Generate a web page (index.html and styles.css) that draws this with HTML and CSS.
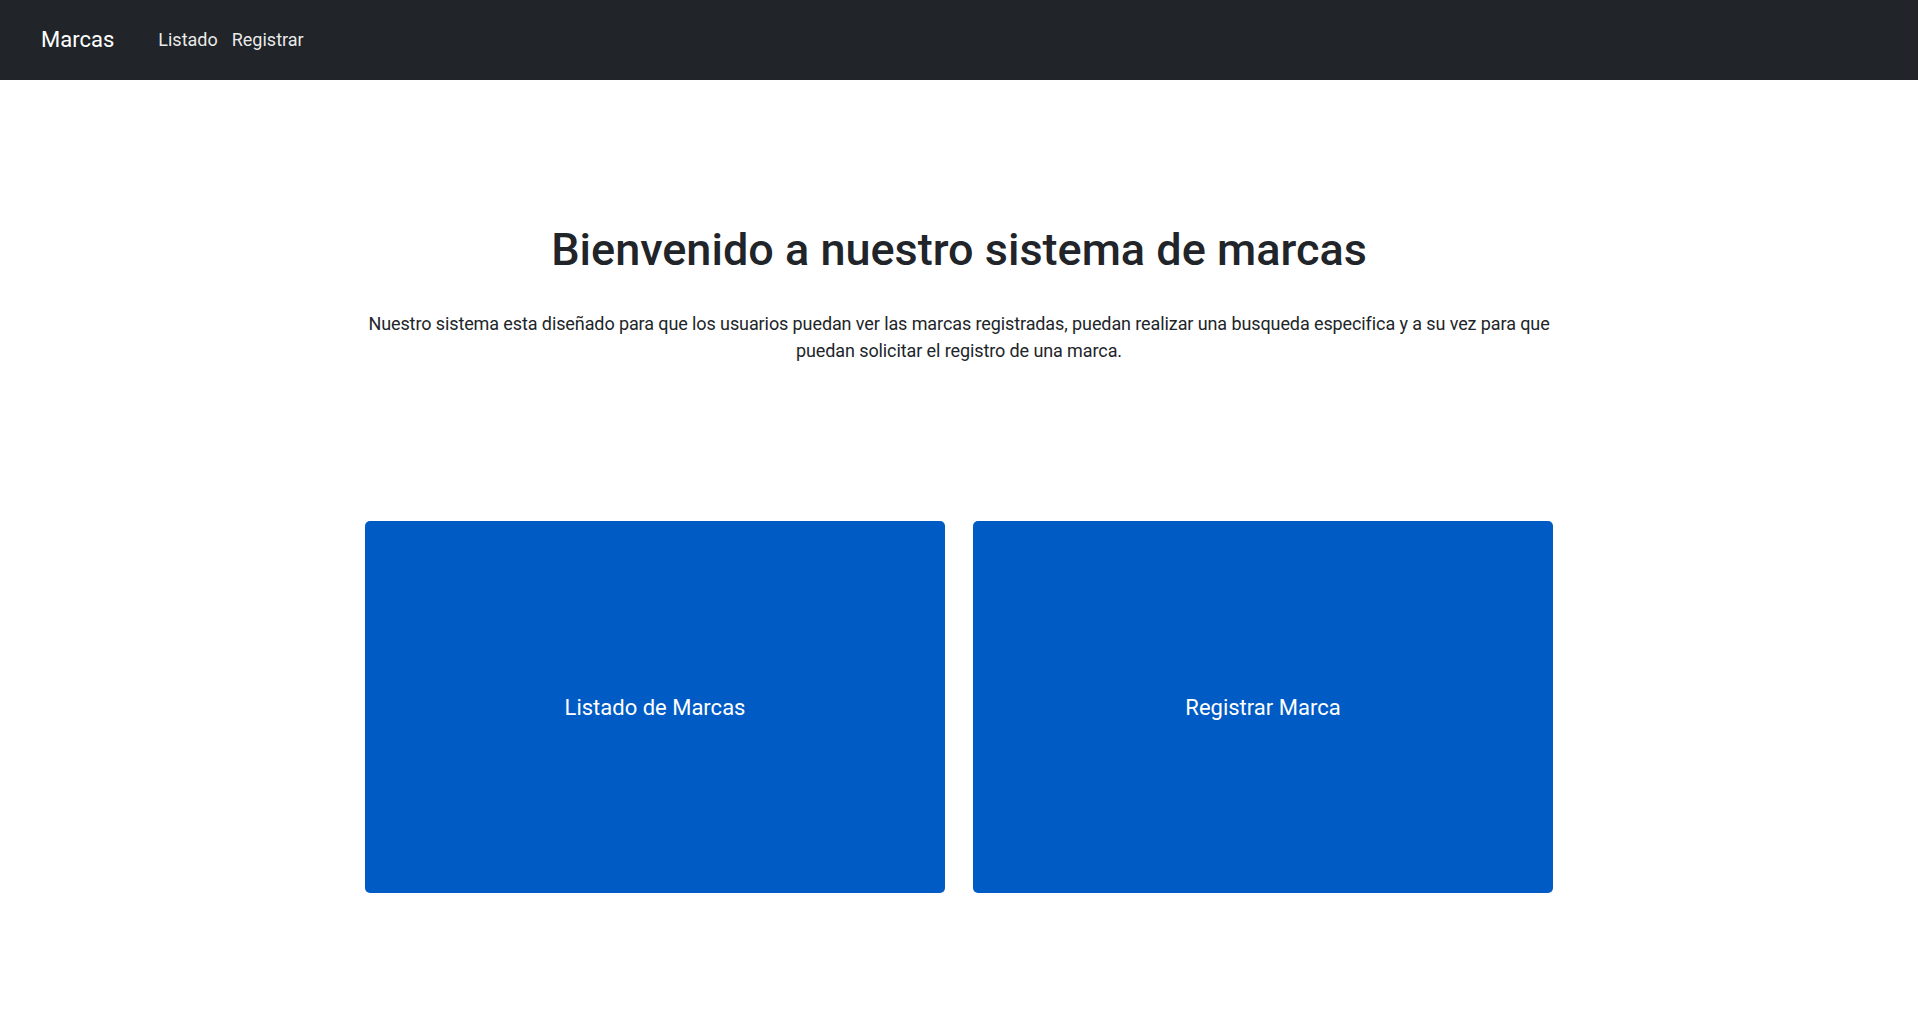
FILE: index.html
```html
<!DOCTYPE html>
<html lang="es">
<head>
<meta charset="utf-8">
<title>Marcas</title>
<link rel="stylesheet" href="styles.css">
</head>
<body>
<nav class="navbar">
  <a class="brand" href="#">Marcas</a>
  <ul class="nav">
    <li><a class="nav-link" href="#">Listado</a></li>
    <li><a class="nav-link" href="#">Registrar</a></li>
  </ul>
</nav>
<main class="container">
  <section class="intro">
    <h1 class="title">Bienvenido a nuestro sistema de marcas</h1>
    <p class="lead">Nuestro sistema esta diseñado para que los usuarios puedan ver las marcas registradas, puedan realizar una busqueda especifica y a su vez para que puedan solicitar el registro de una marca.</p>
  </section>
  <section class="cards">
    <a class="card" href="#">Listado de Marcas</a>
    <a class="card" href="#">Registrar Marca</a>
  </section>
</main>
</body>
</html>
```
FILE: styles.css
```css
* { box-sizing: border-box; }
html, body { margin: 0; padding: 0; }
body {
  font-family: Roboto, "Noto Sans", sans-serif;
  color: #212529;
  background: #fff;
}
a { text-decoration: none; }
.navbar {
  height: 80px;
  background: #212529;
  display: flex;
  align-items: center;
  padding: 0 0 2px 41px;
}
.brand {
  color: #fff;
  font-size: 22px;
  margin-right: 44px;
}
.nav {
  list-style: none;
  margin: 0;
  padding: 0;
  display: flex;
  gap: 14px;
}
.nav-link {
  color: rgba(255,255,255,0.92);
  font-size: 18px;
}
.container {
  width: 1188px;
  margin: 0 auto;
}
.intro {
  text-align: center;
  padding-top: 143px;
}
.title {
  margin: 0;
  font-size: 45px;
  font-weight: 500;
  line-height: 54px;
}
.lead {
  margin: 33px 0 0;
  font-size: 18px;
  line-height: 27px;
  letter-spacing: -0.1px;
}
.cards {
  margin-top: 157px;
  display: grid;
  grid-template-columns: 1fr 1fr;
  gap: 28px;
}
.card {
  height: 372px;
  background: #005bc4;
  border-radius: 5px;
  color: #fff;
  font-size: 22px;
  display: flex;
  align-items: center;
  justify-content: center;
}
```
